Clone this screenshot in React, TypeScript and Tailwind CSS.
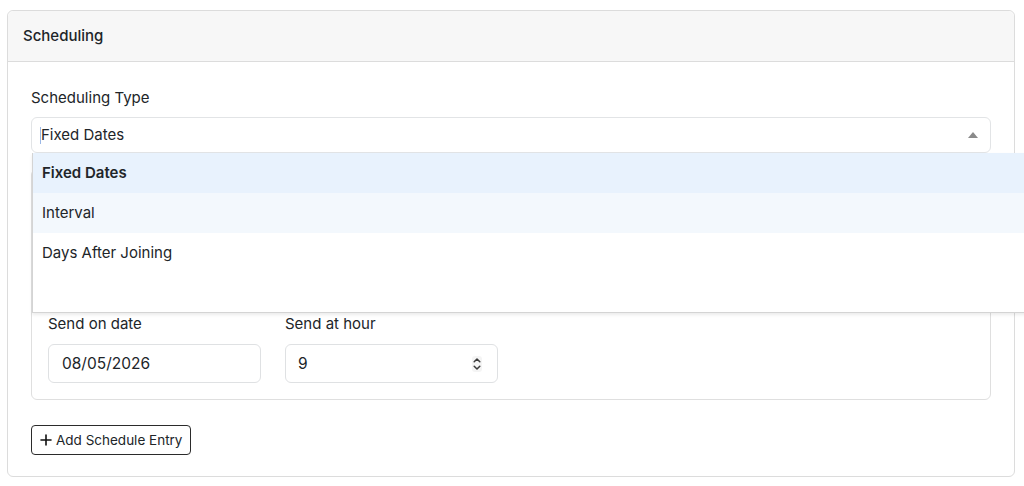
import React from "react";

function SpinnerArrows() {
  return (
    <svg width="10" height="16" viewBox="0 0 10 16" fill="none" stroke="#3a3a3a" strokeWidth="1.5" strokeLinecap="round" strokeLinejoin="round">
      <path d="M2.2 5.8 L5 3 L7.8 5.8" />
      <path d="M2.2 10.2 L5 13 L7.8 10.2" />
    </svg>
  );
}

export default function App() {
  const font = { fontFamily: "Inter, 'Noto Sans', sans-serif" };
  return (
    <div className="w-[1024px] h-[486px] overflow-hidden bg-white text-[#212529]" style={font}>
      <div className="pt-[10px] pl-[7px] pr-[9px]">
        <div className="border border-[#dcdcdc] rounded-[6px] bg-white">
          {/* card header */}
          <div className="h-[51px] bg-[#f7f7f7] border-b border-[#dcdcdc] rounded-t-[6px] flex items-center px-[15px]">
            <span className="text-[15px] font-medium">Scheduling</span>
          </div>

          {/* card body */}
          <div className="px-[23px] pt-[25px] pb-[21px]">
            <label className="block text-[15px] leading-[22px] mb-[8px]">Scheduling Type</label>

            <div className="relative">
              <div className="h-[36px] border border-[#e2e4e6] rounded-[6px] flex items-center pl-[8px] pr-[12px]">
                <span className="w-px h-[17px] bg-[#9bb8e6]" />
                <span className="text-[15px]">Fixed Dates</span>
                <span className="ml-auto w-0 h-0 border-l-[5px] border-r-[5px] border-b-[6px] border-l-transparent border-r-transparent border-b-[#8a8a8a]" />
              </div>

              {/* open options list */}
              <div className="absolute z-10 top-[36px] left-px w-[1010px] h-[160px] bg-white border-b border-l border-[#d4d4d4] shadow-[0_2px_3px_rgba(0,0,0,0.08)]">
                <div className="h-[40px] bg-[#e8f2fd] flex items-center pl-[9px] text-[15px] font-semibold">Fixed Dates</div>
                <div className="h-[40px] bg-[#f3f8fd] flex items-center pl-[9px] text-[15px]">Interval</div>
                <div className="h-[40px] flex items-center pl-[9px] text-[15px]">Days After Joining</div>
              </div>

              {/* schedule entry */}
              <div className="mt-[16px] border border-[#dfdfdf] rounded-[6px] px-[16px] pt-[143px] pb-[16px]">
                <div className="flex gap-[24px]">
                  <div className="w-[213px]">
                    <label className="block text-[15px] leading-[22px] mb-[9px]">Send on date</label>
                    <div className="h-[39px] border border-[#dfe1e3] rounded-[6px] flex items-center px-[13px] text-[15.5px]">08/05/2026</div>
                  </div>
                  <div className="w-[213px]">
                    <label className="block text-[15px] leading-[22px] mb-[9px]">Send at hour</label>
                    <div className="h-[39px] border border-[#dfe1e3] rounded-[6px] flex items-center pl-[12px] pr-[15px] text-[15.5px]">
                      <span>9</span>
                      <span className="ml-auto flex items-center rounded-[3px] bg-[#f4f4f4]">
                        <SpinnerArrows />
                      </span>
                    </div>
                  </div>
                </div>
              </div>
            </div>

            <button className="mt-[25px] h-[30px] px-[8px] border border-[#2b2b2b] rounded-[4px] flex items-center gap-[4px] text-[13.5px] bg-white">
              <svg width="12" height="12" viewBox="0 0 12 12" stroke="#111" strokeWidth="1.6" strokeLinecap="round">
                <path d="M6 1 V11 M1 6 H11" />
              </svg>
              <span>Add Schedule Entry</span>
            </button>
          </div>
        </div>
      </div>
    </div>
  );
}
